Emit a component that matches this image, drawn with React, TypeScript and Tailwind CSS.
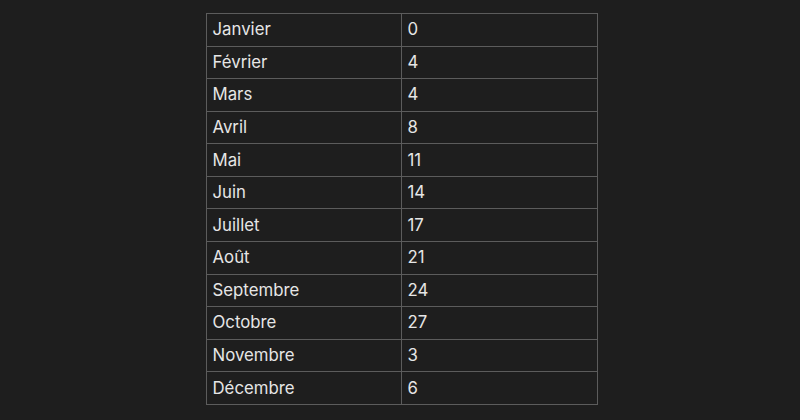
import React from "react";

const rows: [string, string][] = [
  ["Janvier", "0"],
  ["Février", "4"],
  ["Mars", "4"],
  ["Avril", "8"],
  ["Mai", "11"],
  ["Juin", "14"],
  ["Juillet", "17"],
  ["Août", "21"],
  ["Septembre", "24"],
  ["Octobre", "27"],
  ["Novembre", "3"],
  ["Décembre", "6"],
];

export default function App() {
  return (
    <div
      className="w-full h-[420px] bg-[#1e1e1e] flex justify-center pt-[13px] pl-[3px]"
      style={{ fontFamily: "Inter, 'Noto Sans', sans-serif" }}
    >
      <div className="w-[392px] h-[392px] border border-[#5c5c5c] flex flex-col">
        {rows.map(([m, v], i) => (
          <div
            key={m}
            className={`flex flex-1 ${i > 0 ? "border-t border-[#5c5c5c]" : ""}`}
          >
            <div className="w-[195px] border-r border-[#5c5c5c] flex items-center pl-[6px] text-[16.8px] text-[#e6e6e6]">
              {m}
            </div>
            <div className="flex-1 flex items-center pl-[6px] text-[16.8px] text-[#e6e6e6]">
              {v}
            </div>
          </div>
        ))}
      </div>
    </div>
  );
}
